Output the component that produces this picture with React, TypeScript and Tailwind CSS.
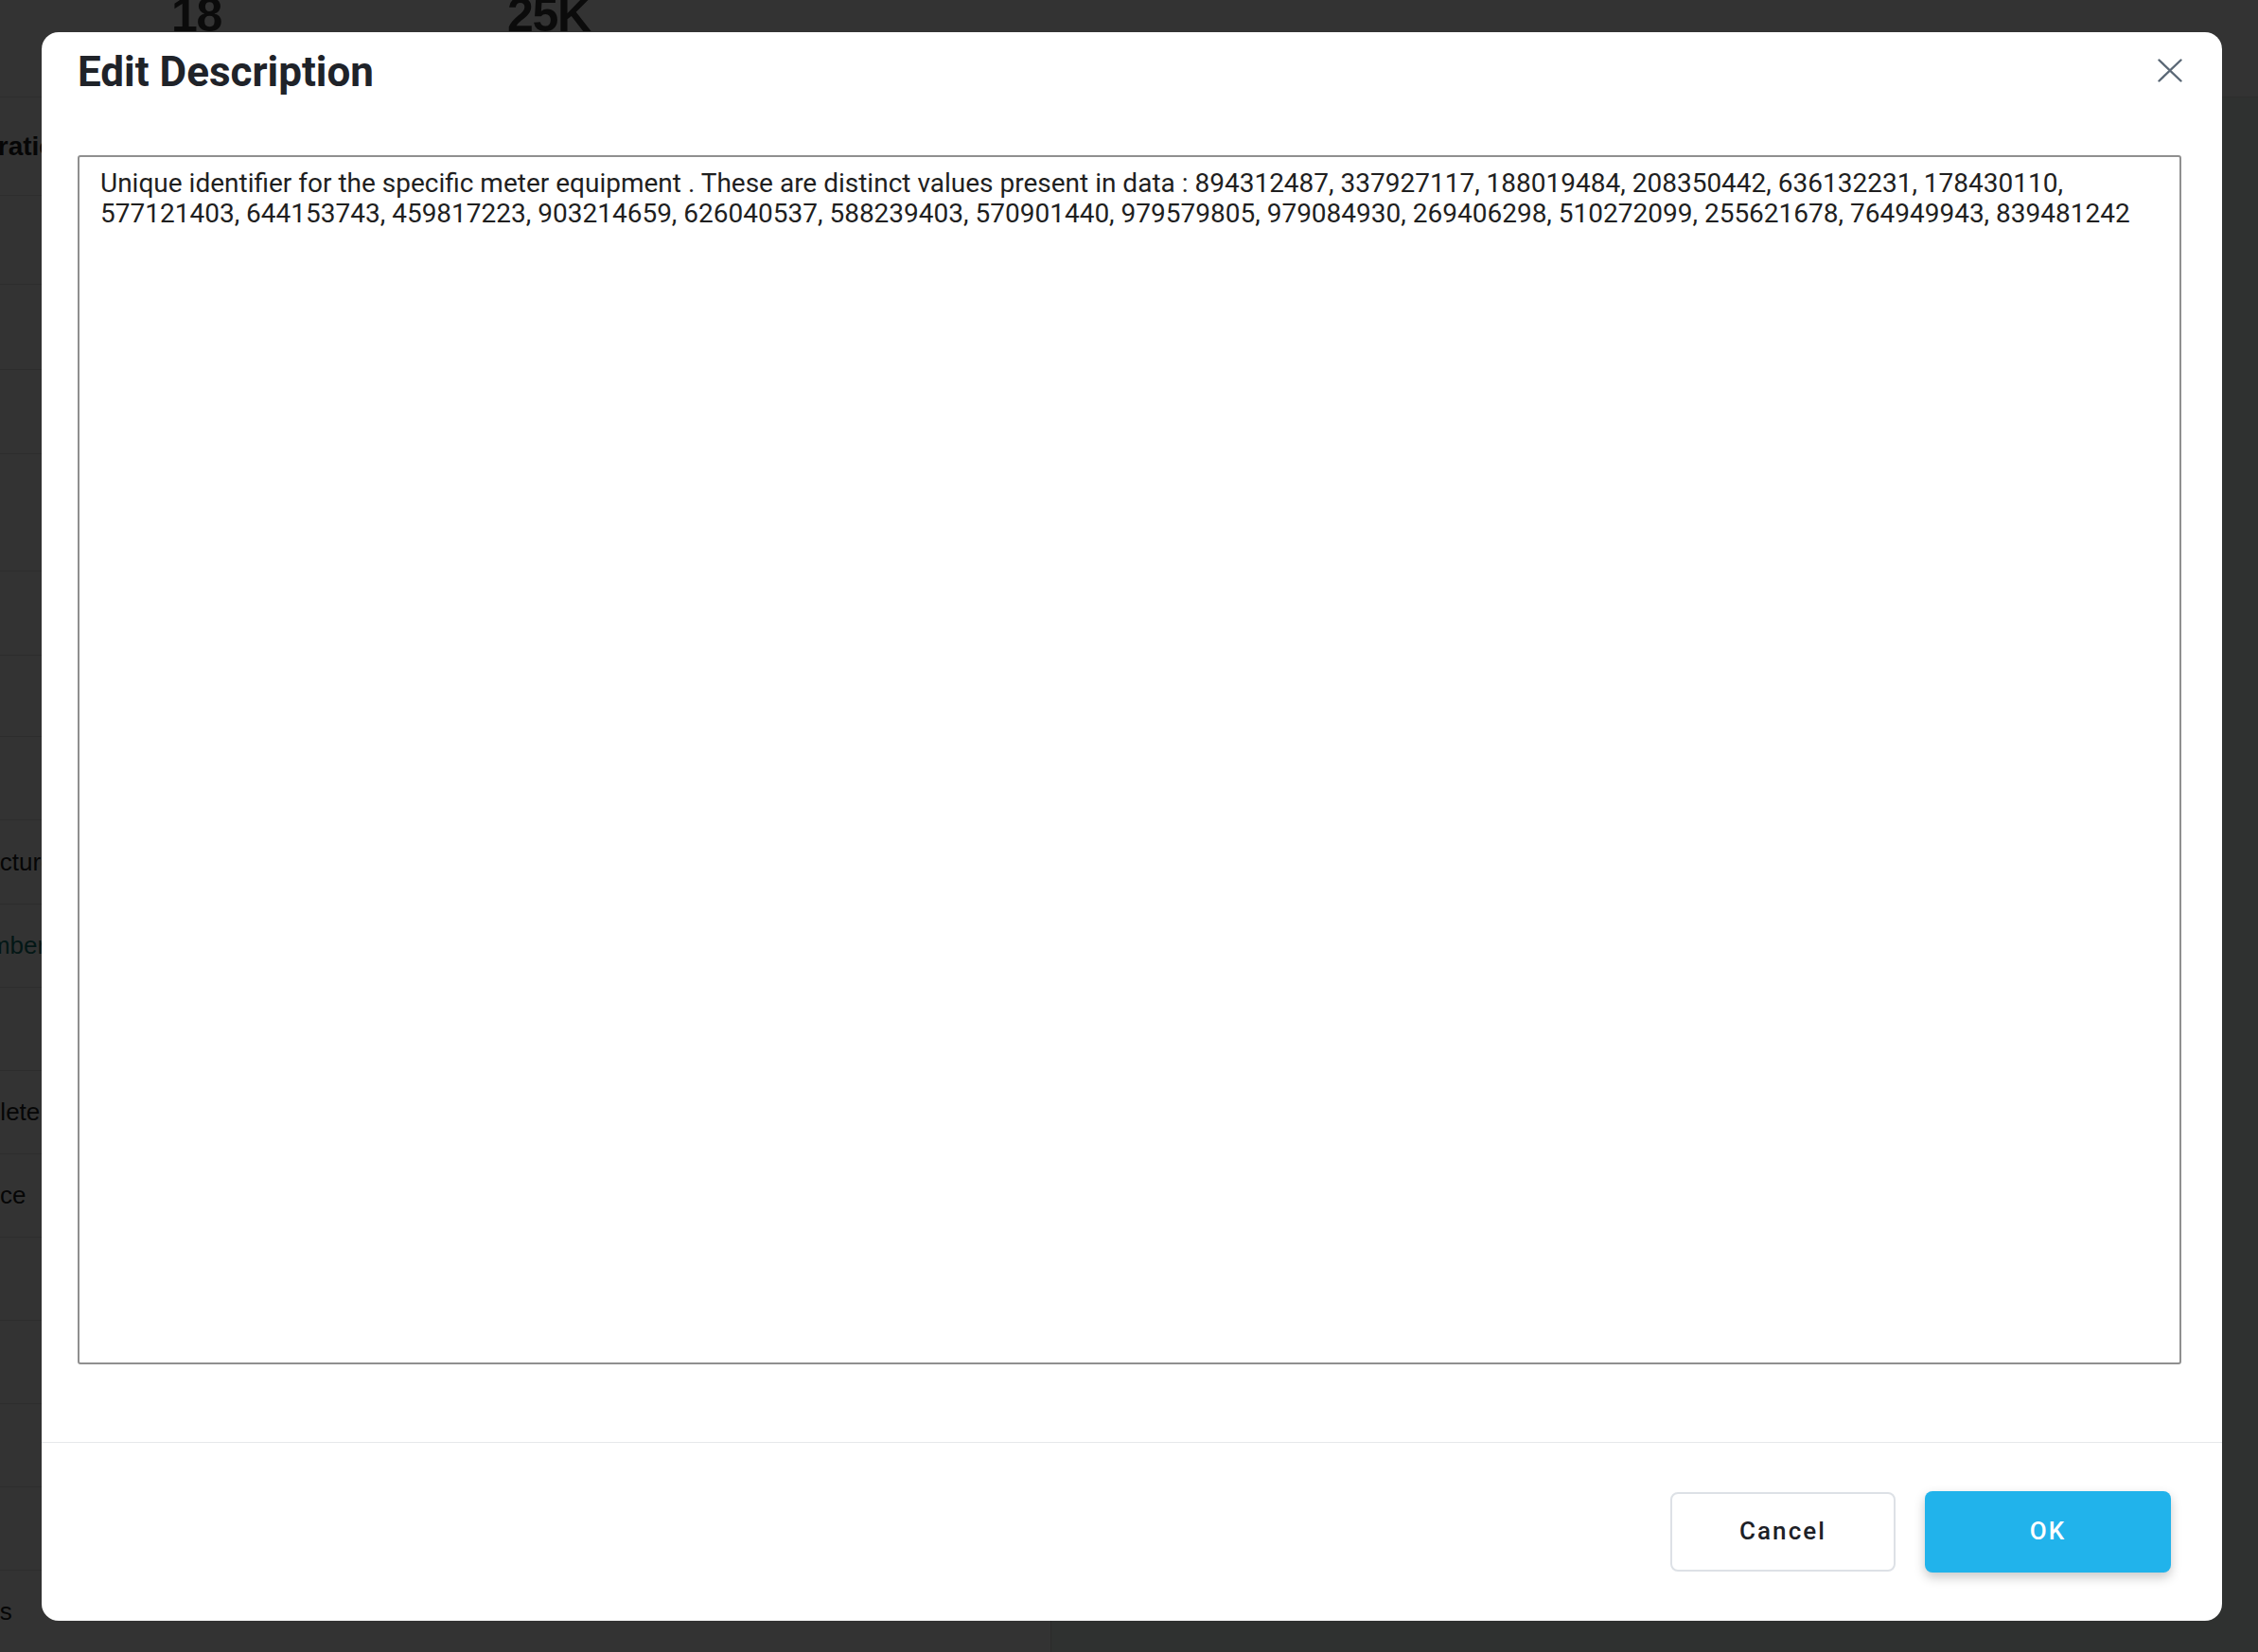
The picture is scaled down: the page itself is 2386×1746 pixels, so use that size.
import React from 'react';

const description =
  'Unique identifier for the specific meter equipment . These are distinct values present in data : 894312487, 337927117, 188019484, 208350442, 636132231, 178430110, 577121403, 644153743, 459817223, 903214659, 626040537, 588239403, 570901440, 979579805, 979084930, 269406298, 510272099, 255621678, 764949943, 839481242';

// rows of the table sitting behind the dialog
const rows = [
  { h: 'h-[104px]', text: 'Configuration', cls: 'font-bold text-[28px] -ml-[108px]' },
  { h: 'h-[94px]', text: '', cls: '' },
  { h: 'h-[90px]', text: '', cls: '' },
  { h: 'h-[89px]', text: '', cls: '' },
  { h: 'h-[124px]', text: '', cls: '' },
  { h: 'h-[89px]', text: '', cls: '' },
  { h: 'h-[86px]', text: '', cls: '' },
  { h: 'h-[88px]', text: '', cls: '' },
  { h: 'h-[89px]', text: 'Manufacturer', cls: '-ml-[87px]' },
  { h: 'h-[88px]', text: 'Meter Number', cls: '-ml-[118px] text-[#0f766e]' },
  { h: 'h-[88px]', text: '', cls: '' },
  { h: 'h-[88px]', text: 'Complete', cls: '-ml-[69px]' },
  { h: 'h-[88px]', text: 'Device', cls: '-ml-[52px]' },
  { h: 'h-[88px]', text: '', cls: '' },
  { h: 'h-[88px]', text: '', cls: '' },
  { h: 'h-[88px]', text: '', cls: '' },
  { h: 'h-[88px]', text: '', cls: '' },
  { h: 'h-[88px]', text: 'Status', cls: '-ml-[61px]' },
];

const CloseIcon = () => (
  <svg width="26" height="25" viewBox="0 0 26 25" fill="none" stroke="currentColor" strokeWidth={2.4} strokeLinecap="round">
    <path d="M1.5 1.5 24.5 23.5M24.5 1.5 1.5 23.5" />
  </svg>
);

const App: React.FC = () => {
  return (
    <div className="relative h-[1746px] w-[2386px] overflow-hidden bg-white font-['Liberation_Sans',Arial,sans-serif] text-[#222]">
      {/* page underneath */}
      <div className="flex h-[103px] items-start overflow-hidden border-b border-[#dedede]">
        <div className="-mt-[9px] flex pl-[181px] text-[50px] font-bold leading-none tracking-tight text-[#3a3a3a]">
          <span className="w-[355px]">18</span>
          <span>25K</span>
        </div>
      </div>
      <div className="flex h-[1643px]">
        <div className="flex w-[1110px] flex-col">
          {rows.map((r, i) => (
            <div key={i} className={`${r.h} flex shrink-0 items-center border-b border-[#e2e2e2] text-[26px] whitespace-nowrap`}>
              {r.text && <span className={r.cls}>{r.text}</span>}
            </div>
          ))}
        </div>
        <div className="flex-1 border-l border-[#cfd4d2] bg-[#ebf5f0]" />
      </div>

      {/* dialog */}
      <div className="absolute inset-0 flex items-center justify-center bg-black/80 pl-[6px]">
        <div className="flex h-[1679px] w-[2304px] flex-col rounded-[18px] bg-white font-['Roboto','Liberation_Sans',sans-serif]">
          <div className="flex flex-1 flex-col pl-[38px] pr-[43px] pt-[18px] pb-[82px]">
            <div className="flex items-start justify-between">
              <h2 className="text-[44px] font-bold leading-[48px] text-[#1f2329]">Edit Description</h2>
              <button className="mt-[10px] -mr-[1px] text-[#5b6876]">
                <CloseIcon />
              </button>
            </div>
            <textarea
              className="mt-[64px] h-[1278px] w-full resize-none rounded-[3px] border-2 border-[#8f8f8f] px-[22px] pt-[12px] pb-[10px] text-[28px] leading-[32px] text-[#1f1f1f] outline-none"
              defaultValue={description}
            />
          </div>
          <div className="flex h-[189px] items-center justify-end gap-[31px] border-t border-[#e6e8eb] pr-[54px]">
            <button className="h-[84px] w-[238px] rounded-[8px] border-2 border-[#dde1e6] bg-white text-[26px] font-medium tracking-[0.08em] text-[#1d2127]">
              Cancel
            </button>
            <button className="h-[86px] w-[260px] rounded-[8px] bg-[#21b3eb] text-[26px] font-medium tracking-[0.08em] text-white shadow-[0_5px_12px_rgba(0,0,0,0.22)]">
              OK
            </button>
          </div>
        </div>
      </div>
    </div>
  );
};

export default App;
